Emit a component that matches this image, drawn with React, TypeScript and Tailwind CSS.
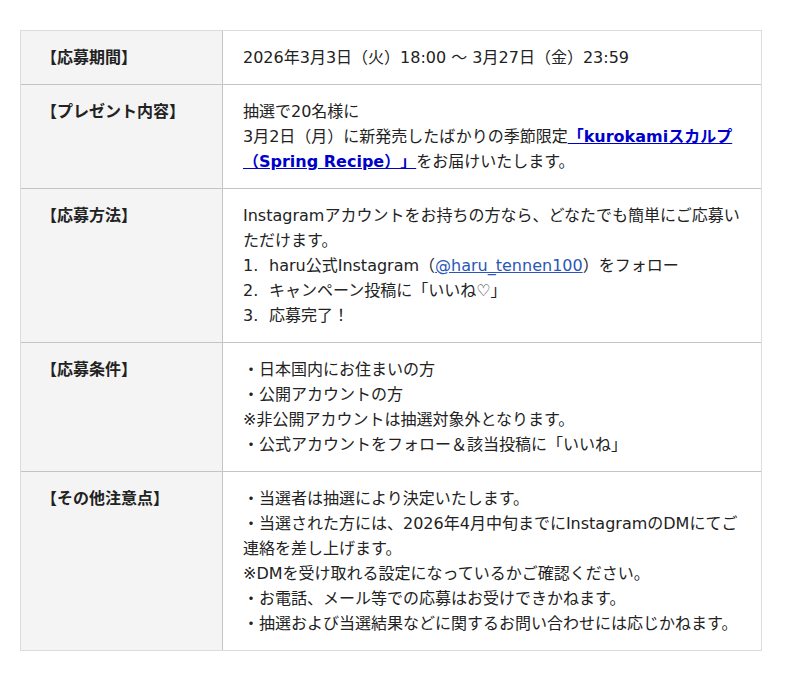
import React from "react";

const rowCls = "flex border-t border-[#c4c4c4] first:border-t-0";
const labelCls =
  "w-[202px] shrink-0 bg-[#f4f4f4] border-r border-[#c4c4c4] px-5 py-[14px] text-[16px] font-bold leading-[25px]";
const valueCls = "flex-1 px-5 py-[14px] text-[16px] leading-[25px]";

const Step: React.FC<{ n: number; children: React.ReactNode }> = ({ n, children }) => (
  <div className="flex">
    <span className="w-[26px] shrink-0">{n}.</span>
    <span>{children}</span>
  </div>
);

export default function App() {
  return (
    <div
      className="min-h-screen bg-white text-[#222] [text-spacing-trim:space-all]"
      style={{ fontFamily: '"DejaVu Sans", "Noto Sans CJK JP", sans-serif' }}
    >
      <div className="pt-[30px] pl-5">
        <div className="w-[742px] border border-[#dcdcdc]">
          <div className={rowCls}>
            <div className={labelCls}>【応募期間】</div>
            <div className={valueCls}>2026年3月3日（火）18:00 〜 3月27日（金）23:59</div>
          </div>

          <div className={rowCls}>
            <div className={labelCls}>【プレゼント内容】</div>
            <div className={valueCls}>
              <p>抽選で20名様に</p>
              <p>
                3月2日（月）に新発売したばかりの季節限定
                <a href="#" className="font-bold text-[#0000cc] underline">
                  「kurokamiスカルプ（Spring Recipe）」
                </a>
                をお届けいたします。
              </p>
            </div>
          </div>

          <div className={rowCls}>
            <div className={labelCls}>【応募方法】</div>
            <div className={valueCls}>
              <p>Instagramアカウントをお持ちの方なら、どなたでも簡単にご応募いただけます。</p>
              <Step n={1}>
                haru公式Instagram（
                <a href="#" className="text-[#2a56b8] underline">
                  @haru_tennen100
                </a>
                ）をフォロー
              </Step>
              <Step n={2}>キャンペーン投稿に「いいね♡」</Step>
              <Step n={3}>応募完了！</Step>
            </div>
          </div>

          <div className={rowCls}>
            <div className={labelCls}>【応募条件】</div>
            <div className={valueCls}>
              <p>・日本国内にお住まいの方</p>
              <p>・公開アカウントの方</p>
              <p>※非公開アカウントは抽選対象外となります。</p>
              <p>・公式アカウントをフォロー＆該当投稿に「いいね」</p>
            </div>
          </div>

          <div className={rowCls}>
            <div className={labelCls}>【その他注意点】</div>
            <div className={valueCls}>
              <p>・当選者は抽選により決定いたします。</p>
              <p>・当選された方には、2026年4月中旬までにInstagramのDMにてご連絡を差し上げます。</p>
              <p>※DMを受け取れる設定になっているかご確認ください。</p>
              <p>・お電話、メール等での応募はお受けできかねます。</p>
              <p>・抽選および当選結果などに関するお問い合わせには応じかねます。</p>
            </div>
          </div>
        </div>
      </div>
    </div>
  );
}
